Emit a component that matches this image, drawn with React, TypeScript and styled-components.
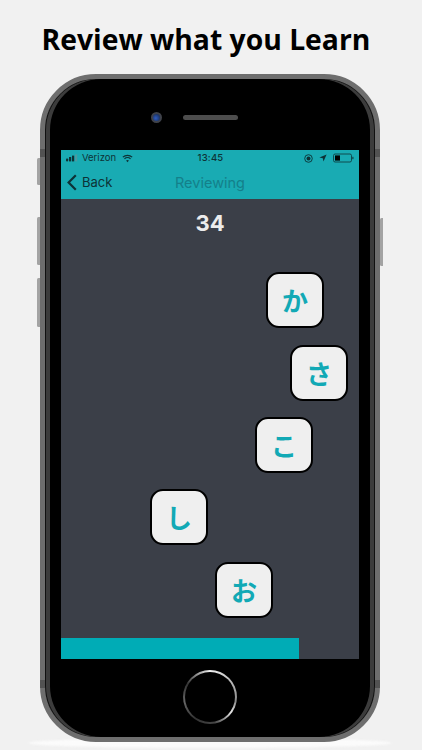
import React, {FC} from 'react';
import styled, {createGlobalStyle} from 'styled-components';

const GlobalStyle = createGlobalStyle`
    html, body {
        margin: 0;
        padding: 0;
        background: #f1f1f1;
        overflow: hidden;
    }
`;

const Page = styled.div`
    width: 422px;
    height: 750px;
    position: relative;
    overflow: hidden;
    background: #f1f1f1;
    display: flex;
    flex-direction: column;
`;

const Title = styled.h1`
    margin: 0;
    height: 74px;
    width: 412px;
    padding-top: 19px;
    box-sizing: border-box;
    text-align: center;
    font: 700 28.3px/40px 'Open Sans', 'Noto Sans', sans-serif;
    color: #000;
`;

const Shadow = styled.div`
    position: absolute;
    left: 28px;
    top: 738px;
    width: 364px;
    height: 10px;
    border-radius: 50%;
    background: #fbfbfb;
    filter: blur(1px);
`;

const Phone = styled.div`
    position: relative;
    margin-left: 40px;
    width: 340px;
    height: 668px;
    box-sizing: border-box;
    border-radius: 56px;
    background: #000;
    border: 5px solid #6e6e6e;
    box-shadow: inset 1px 0 0 #111, inset -1px 0 0 #111, inset 5px 0 0 #3c3c3c, inset -5px 0 0 #3c3c3c;
    display: flex;
    flex-direction: column;
    align-items: center;
    padding: 0 16px;
`;

const SideButton = styled.div<{$side: 'left' | 'right'; $top: number; $height: number}>`
    position: absolute;
    ${(props) => props.$side}: -8px;
    top: ${(props) => props.$top}px;
    width: 3px;
    height: ${(props) => props.$height}px;
    background: #a3a3a3;
    border-radius: 1.5px 0 0 1.5px;
`;

const Band = styled.div<{$top: number}>`
    position: absolute;
    top: ${(props) => props.$top}px;
    left: -5px;
    right: -5px;
    height: 8px;
    border-left: 5px solid #525252;
    border-right: 5px solid #525252;
`;

const Sensors = styled.div`
    height: 71px;
    width: 100%;
    flex: none;
    display: flex;
    align-items: flex-start;
    justify-content: center;
    gap: 21px;
    padding: 34px 31px 0 0;
    box-sizing: border-box;
`;

const Camera = styled.div`
    width: 11px;
    height: 11px;
    border-radius: 50%;
    box-sizing: border-box;
    border: 2px solid #3f424a;
    background: radial-gradient(circle at 40% 60%, #2f5cc0, #14233f);
    margin-top: -1px;
`;

const Speaker = styled.div`
    width: 55px;
    height: 5px;
    border-radius: 3px;
    background: #4d4d4d;
    margin-top: 2px;
`;

const Screen = styled.div`
    position: relative;
    width: 298px;
    height: 509px;
    flex: none;
    background: #3b3f48;
    display: flex;
    flex-direction: column;
`;

const NavBar = styled.div`
    height: 49px;
    flex: none;
    background: #19abb3;
    display: flex;
    flex-direction: column;
`;

const StatusBar = styled.div`
    height: 16px;
    display: grid;
    grid-template-columns: 1fr auto 1fr;
    align-items: center;
    padding: 0 5px;
    font: 400 9.5px/16px 'Inter', 'Liberation Sans', sans-serif;
    color: #0d3236;
`;

const StatusLeft = styled.div`
    display: flex;
    align-items: center;
    gap: 3px;
`;

const StatusRight = styled.div`
    display: flex;
    align-items: center;
    justify-content: flex-end;
    gap: 6px;
`;

const Time = styled.span`
    font-weight: 500;
    letter-spacing: 0.2px;
    margin-left: 1px;
`;

const NavRow = styled.div`
    position: relative;
    flex: 1;
    display: flex;
    align-items: center;
    justify-content: center;
`;

const BackButton = styled.div`
    position: absolute;
    left: 6px;
    top: 6px;
    display: flex;
    align-items: center;
    gap: 5px;
    font: 400 13px/20px 'Inter', 'Liberation Sans', sans-serif;
    color: #0d3236;
`;

const NavTitle = styled.div`
    font: 400 14.5px/20px 'Inter', 'Liberation Sans', sans-serif;
    color: #14808a;
`;

const Score = styled.div`
    height: 49px;
    flex: none;
    text-align: center;
    font: 700 22px/49px 'Inter', 'Liberation Sans', sans-serif;
    color: #ececec;
`;

const Field = styled.div`
    flex: 1;
`;

const Progress = styled.div`
    height: 21px;
    flex: none;
    background: #00acb6;
`;

const Tile = styled.div<{$left: number; $top: number}>`
    position: absolute;
    left: ${(props) => props.$left}px;
    top: ${(props) => props.$top}px;
    width: 58px;
    height: 56px;
    box-sizing: border-box;
    border: 2.5px solid #000;
    border-radius: 13px;
    background: #efefef;
    display: flex;
    align-items: center;
    justify-content: center;
    font: 700 26px/1 'Noto Sans CJK JP', sans-serif;
    color: #12a9b5;
`;

const HomeButton = styled.div`
    width: 54px;
    height: 54px;
    margin-top: 11px;
    flex: none;
    box-sizing: border-box;
    border-radius: 50%;
    padding: 2px;
    background: conic-gradient(#f2f2f2 0deg, #bdbdbd 50deg, #8a8a8a 100deg, #e6e6e6 125deg, #444 170deg, #333 215deg, #666 260deg, #333 300deg, #f2f2f2 360deg);
`;

const HomeFace = styled.div`
    width: 100%;
    height: 100%;
    border-radius: 50%;
    background: #000;
`;

const tiles = [
    {kana: 'か', left: 205, top: 122},
    {kana: 'さ', left: 229, top: 194.5},
    {kana: 'こ', left: 194, top: 267},
    {kana: 'し', left: 89, top: 339},
    {kana: 'お', left: 154, top: 412},
];

const SignalIcon: FC = () => (
    <svg width='13' height='8' viewBox='0 0 13 8'>
        <rect x='0' y='4.4' width='2.2' height='3' rx='0.8' fill='#0d3236'/>
        <rect x='3' y='3' width='2.2' height='4.4' fill='#0d3236'/>
        <rect x='6' y='1.6' width='2.2' height='5.8' fill='#0d3236'/>
        <rect x='9' y='0.4' width='2.2' height='7' fill='#4c9aa0'/>
    </svg>
);

const WifiIcon: FC = () => (
    <svg width='11' height='9' viewBox='0 0 13 10' fill='none' stroke='#0d3236' strokeWidth='1.4' style={{marginLeft: 3}}>
        <path d='M1 3.4a8 8 0 0 1 11 0'/>
        <path d='M2.9 5.5a5.2 5.2 0 0 1 7.2 0'/>
        <path d='M6.5 9.4 4.8 7.5a2.5 2.5 0 0 1 3.4 0z' fill='#0d3236' stroke='none'/>
    </svg>
);

const LockIcon: FC = () => (
    <svg width='9' height='9' viewBox='0 0 9 9' fill='none'>
        <circle cx='4.5' cy='4.5' r='3.8' stroke='#0d3236' strokeWidth='0.9'/>
        <circle cx='4.5' cy='4.5' r='2' fill='#0d3236'/>
    </svg>
);

const LocationIcon: FC = () => (
    <svg width='8' height='8' viewBox='0 0 8 8'>
        <path d='M7.6.4.4 3.6l3.4.6.7 3.4z' fill='#0d3236'/>
    </svg>
);

const BatteryIcon: FC = () => (
    <svg width='21' height='10' viewBox='0 0 21 10'>
        <rect x='0.5' y='1' width='18' height='8' rx='1.6' fill='none' stroke='#0d3236' strokeWidth='0.8'/>
        <rect x='2' y='2.4' width='5' height='5.2' fill='#000'/>
        <rect x='19.4' y='3.8' width='1' height='2.4' fill='#0d3236'/>
    </svg>
);

const BackChevron: FC = () => (
    <svg width='10' height='17' viewBox='0 0 10 17' fill='none' stroke='#0d3236' strokeWidth='2.2'>
        <path d='M8.8 1.2 1.6 8.5l7.2 7.3'/>
    </svg>
);

const App: FC = () => (
    <Page>
        <GlobalStyle/>
        <Title>{'Review what you Learn'}</Title>
        <Shadow/>
        <Phone>
            <SideButton $side='left' $top={79} $height={27}/>
            <SideButton $side='left' $top={138} $height={48}/>
            <SideButton $side='left' $top={199} $height={49}/>
            <SideButton $side='right' $top={139} $height={48}/>
            <Band $top={70}/>
            <Band $top={601}/>
            <Sensors>
                <Camera/>
                <Speaker/>
            </Sensors>
            <Screen>
                <NavBar>
                    <StatusBar>
                        <StatusLeft>
                            <SignalIcon/>
                            <span>{'Verizon'}</span>
                            <WifiIcon/>
                        </StatusLeft>
                        <Time>{'13:45'}</Time>
                        <StatusRight>
                            <LockIcon/>
                            <LocationIcon/>
                            <BatteryIcon/>
                        </StatusRight>
                    </StatusBar>
                    <NavRow>
                        <BackButton>
                            <BackChevron/>
                            <span>{'Back'}</span>
                        </BackButton>
                        <NavTitle>{'Reviewing'}</NavTitle>
                    </NavRow>
                </NavBar>
                <Score>{'34'}</Score>
                <Field/>
                <Progress style={{width: `${(238 / 298) * 100}%`}}/>
                {tiles.map((tile) => (
                    <Tile
                        key={tile.kana}
                        $left={tile.left}
                        $top={tile.top}
                    >
                        {tile.kana}
                    </Tile>
                ))}
            </Screen>
            <HomeButton>
                <HomeFace/>
            </HomeButton>
        </Phone>
    </Page>
);

export default App;
